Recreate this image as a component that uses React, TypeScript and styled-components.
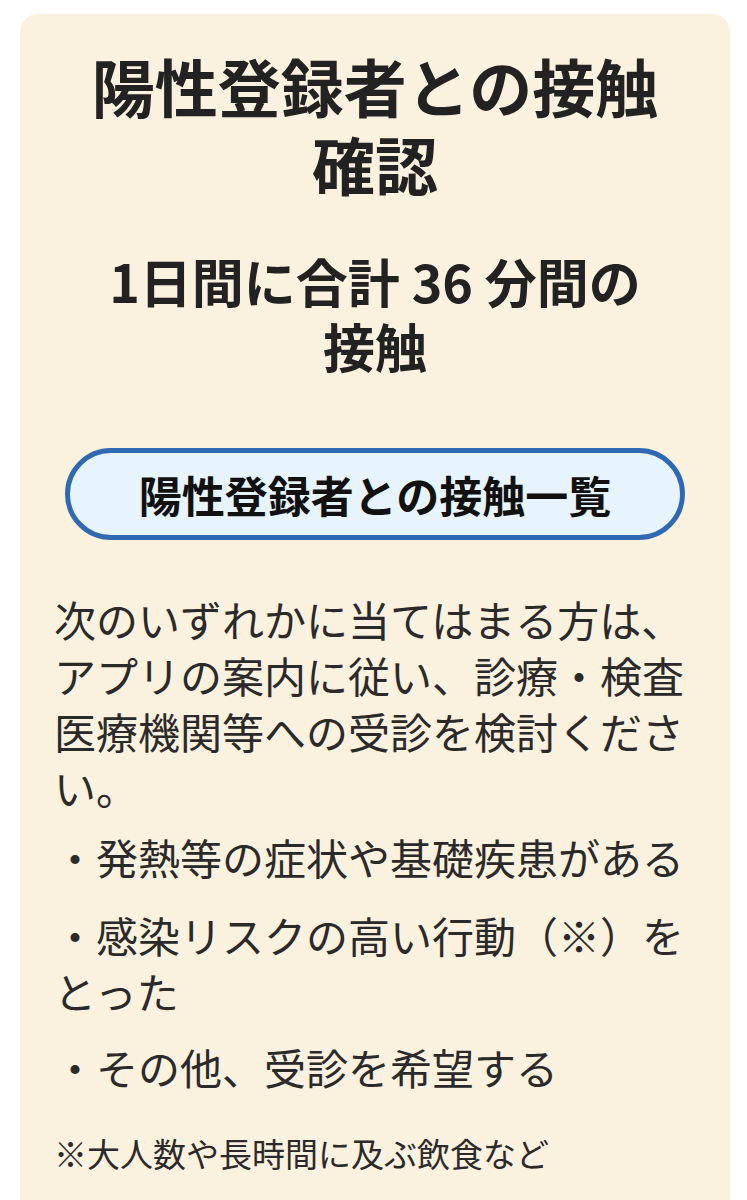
import React from "react"
import styled, { createGlobalStyle } from "styled-components"

const GlobalStyle = createGlobalStyle`
    html, body {
        margin: 0;
        padding: 0;
        background: #ffffff;
    }
    body {
        font-family: "Noto Sans CJK JP", "Noto Sans", sans-serif;
        color: #222222;
    }
`

const Page = styled.div`
    padding: 14px 17px 0 20px;
`

const Card = styled.div`
    background: #fbf1df;
    border-radius: 18px;
    padding: 32px 34px 60px 34px;
    min-height: 1200px;
    box-sizing: border-box;
`

const Title = styled.h1`
    margin: 0;
    padding: 0 30px;
    font-size: 63px;
    font-weight: 700;
    line-height: 78px;
    text-align: center;
    color: #222222;
`

const SubTitle = styled.h2`
    margin: 46px 0 0 0;
    padding: 0 40px;
    font-size: 52px;
    font-weight: 700;
    line-height: 65px;
    text-align: center;
    color: #222222;
`

const ListButton = styled.button`
    display: flex;
    align-items: center;
    justify-content: center;
    width: calc(100% - 22px);
    margin: 70px auto 0 auto;
    height: 92px;
    box-sizing: border-box;
    border: 5px solid #2f69b3;
    border-radius: 46px;
    background: #e8f4fd;
    font-family: "Noto Sans CJK JP", sans-serif;
    font-size: 43px;
    font-weight: 700;
    color: #111111;
    cursor: pointer;
`

const Body = styled.p<{ $gap?: number }>`
    margin: ${p => p.$gap ?? 0}px 0 0 0;
    font-size: 42px;
    font-weight: 400;
    line-height: 56px;
    color: #2a2a2a;
`

const Note = styled.p`
    margin: 35px 0 0 0;
    font-size: 33px;
    line-height: 46px;
    color: #2a2a2a;
`

export default function App() {
    return <>
        <GlobalStyle />
        <Page>
            <Card>
                <Title>陽性登録者との接触確認</Title>
                <SubTitle>1日間に合計 36 分間の接触</SubTitle>
                <ListButton>陽性登録者との接触一覧</ListButton>
                <Body $gap={51}>
                    次のいずれかに当てはまる方は、アプリの案内に従い、診療・検査医療機関等への受診を検討ください。
                </Body>
                <Body $gap={14}>・発熱等の症状や基礎疾患がある</Body>
                <Body $gap={22}>・感染リスクの高い行動（※）をとった</Body>
                <Body $gap={20}>・その他、受診を希望する</Body>
                <Note>※大人数や長時間に及ぶ飲食など</Note>
            </Card>
        </Page>
    </>
}
